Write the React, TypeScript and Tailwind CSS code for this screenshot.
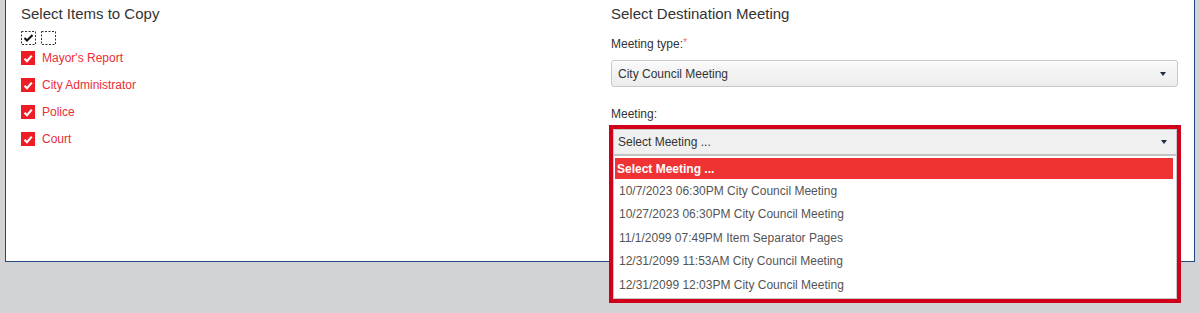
const font = "font-['Liberation_Sans',Arial,sans-serif]";

const items = ["Mayor's Report", "City Administrator", "Police", "Court"];

const meetings = [
  "10/7/2023 06:30PM City Council Meeting",
  "10/27/2023 06:30PM City Council Meeting",
  "11/1/2099 07:49PM Item Separator Pages",
  "12/31/2099 11:53AM City Council Meeting",
  "12/31/2099 12:03PM City Council Meeting",
];

function Caret() {
  return (
    <svg width="6" height="4" viewBox="0 0 6 4" className="shrink-0">
      <path d="M0 0 H6 L3 4 Z" fill="#1f2a44" />
    </svg>
  );
}

function DashedBox({ checked }: { checked?: boolean }) {
  return (
    <svg width="15" height="14" viewBox="0 0 15 14">
      <rect
        x="0.5"
        y="0.5"
        width="14"
        height="13"
        fill="none"
        stroke="#333"
        strokeDasharray="2 1.5"
      />
      {checked && (
        <path
          d="M3.5 7 L6 9.5 L11.5 4"
          fill="none"
          stroke="#111"
          strokeWidth="2"
        />
      )}
    </svg>
  );
}

function RedCheck() {
  return (
    <span className="flex w-[14px] h-[14px] items-center justify-center bg-[#ee1c25]">
      <svg width="10" height="9" viewBox="0 0 10 9">
        <path
          d="M1.5 4.8 L4 7.2 L8.8 1.6"
          fill="none"
          stroke="#fff"
          strokeWidth="2.2"
        />
      </svg>
    </span>
  );
}

function SelectBox({ label, className = "" }: { label: string; className?: string }) {
  return (
    <div
      className={`flex h-[27px] items-center justify-between border border-[#c8c8c8] bg-gradient-to-b from-[#fafafa] to-[#ececec] text-[12px] leading-[14px] text-[#333] ${className}`}
    >
      <span>{label}</span>
      <Caret />
    </div>
  );
}

export default function App() {
  return (
    <div className={`w-[1200px] h-[313px] bg-[#d2d3d5] ${font}`}>
      <div className="mx-[5px] h-[262px] bg-white border-x border-b border-[#2a4680] flex pl-[15px] pr-[16px]">
        {/* ─── Left: items ─── */}
        <div className="w-[590px] shrink-0 pt-[4px]">
          <h3 className="text-[15px] leading-[20px] text-[#333]">
            Select Items to Copy
          </h3>
          <div className="flex gap-[5px] mt-[7px] h-[13px] items-center">
            <DashedBox checked />
            <DashedBox />
          </div>
          <div className="flex flex-col gap-[13px] mt-[7px]">
            {items.map((it) => (
              <div key={it} className="flex items-center gap-[7px] h-[14px]">
                <RedCheck />
                <span className="text-[12px] leading-[14px] text-[#ea2e36]">
                  {it}
                </span>
              </div>
            ))}
          </div>
        </div>

        {/* ─── Right: destination ─── */}
        <div className="flex-1 pt-[4px]">
          <h3 className="text-[15px] leading-[20px] text-[#333]">
            Select Destination Meeting
          </h3>
          <p className="mt-[13px] text-[12px] leading-[14px] text-[#333]">
            Meeting type:<span className="text-[#f07a7a] align-top text-[11px] leading-[10px]">*</span>
          </p>
          <SelectBox
            label="City Council Meeting"
            className="mt-[9px] rounded-[3px] pl-[6px] pr-[11px] shadow-[inset_0_1px_0_#fff]"
          />
          <p className="mt-[20px] text-[12px] leading-[14px] text-[#333]">
            Meeting:
          </p>
          <div className="relative mt-[4px] -ml-[2px] -mr-[3px] border-4 border-[#d0021b] bg-white">
            <SelectBox
              label="Select Meeting ..."
              className="pl-[4px] pr-[9px] border-b-2 border-b-[#c4c4c4] bg-none bg-[#f0f0f0]"
            />
            <div className="border-x border-b border-[#c8c8c8] bg-white h-[143px] px-px pt-[2px]">
              <div className="h-[21px] flex items-center pl-[2px] mr-[2px] bg-[#ef3234] text-white font-bold text-[12px] leading-[14px]">
                Select Meeting ...
              </div>
              {meetings.map((m) => (
                <div
                  key={m}
                  className="h-[23.5px] flex items-center pl-[4px] text-[12px] leading-[14px] text-[#555]"
                >
                  {m}
                </div>
              ))}
            </div>
          </div>
        </div>
      </div>
    </div>
  );
}
